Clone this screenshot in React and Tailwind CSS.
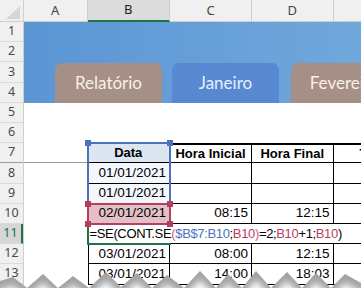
const ROW = "h-[20.2px]";

function RowHead({ n, active, freeze }) {
  return (
    <div
      className={`${ROW} flex items-center justify-center text-[12.5px] font-['Noto_Sans'] border-b ${
        freeze ? "border-[#9c9c9c]" : "border-[#dadada]"
      } ${active ? "bg-[#d6d6d6] text-[#217346] border-r-2 border-r-[#217346]" : "text-[#4a4a4a]"}`}
    >
      {n}
    </div>
  );
}

function Tab({ label, blue, className = "" }) {
  return (
    <div
      className={`w-[107px] h-[40px] shrink-0 rounded-t-[7px] flex items-center justify-center font-['Lato'] text-[17px] ${
        blue ? "bg-[#5888d0] text-[#e3f2ff]" : "bg-[#a68f86] text-[#fbf0e6]"
      } ${className}`}
    >
      {label}
    </div>
  );
}

function Handle({ className }) {
  return <div className={`absolute w-[6px] h-[6px] ${className}`} />;
}

const cellB = "w-[82.5px] shrink-0 border-r border-b border-black flex items-center justify-end pr-[3px]";
const cellC = "w-[82px] shrink-0 border-r border-b border-black flex items-center justify-end pr-[3px]";
const cellD = "w-[81.5px] shrink-0 border-r border-b border-black flex items-center justify-end pr-[3px]";
const cellE = "w-[82px] shrink-0 border-b border-black";

function DataRow({ b, c, d, bClass = "" }) {
  return (
    <div className={`${ROW} flex text-[13.5px] text-black`}>
      <div className="w-[63.5px] shrink-0" />
      <div className={`${cellB} border-l ${bClass}`}>{b}</div>
      <div className={cellC}>{c}</div>
      <div className={cellD}>{d}</div>
      <div className={cellE} />
    </div>
  );
}

function TornEdge() {
  const pts = [
    [0, 15], [13, 11], [27, 22], [43, 8], [58, 22], [73, 10], [89, 22], [106, 6],
    [121, 21], [137, 7], [152, 22], [167, 9], [184, 22], [200, 5], [216, 22],
    [228, 8], [242, 22], [256, 5], [271, 22], [287, 6], [302, 22], [316, 7],
    [331, 22], [345, 8], [361, 17], [361, 40], [0, 40],
  ];
  const p = pts.map((q) => q.join(",")).join(" ");
  return (
    <svg className="absolute left-0 top-[266px]" width="361" height="22" viewBox="0 0 361 22">
      <defs>
        <filter id="soft" x="-10%" y="-50%" width="120%" height="200%">
          <feGaussianBlur stdDeviation="3.5" />
        </filter>
      </defs>
      <polygon points={p} fill="#a2a2a2" />
      <polygon points={p} fill="#ffffff" transform="translate(0,9)" filter="url(#soft)" />
    </svg>
  );
}

export default function App() {
  const blue = "text-[#4a72bd]";
  const red = "text-[#b5405d]";
  const paren = "text-[#c9607a]";
  return (
    <div className="w-[361px] h-[288px] overflow-hidden relative bg-white font-['Liberation_Sans']">
      {/* column headers */}
      <div className="flex h-[22px] bg-[#f0f0f0] text-[13px] font-['Noto_Sans'] text-[#444]">
        <div className="w-[24px] shrink-0 border-r border-b border-[#cfcfcf] relative">
          <svg className="absolute left-[6px] top-[6px]" width="14" height="13" viewBox="0 0 14 13">
            <polygon points="14,0 14,13 0,13" fill="#d6d6d6" />
          </svg>
        </div>
        <div className="w-[63.5px] shrink-0 border-r border-b border-[#cfcfcf] flex items-center justify-center">A</div>
        <div className="w-[82.5px] shrink-0 border-r border-[#cfcfcf] border-b-2 border-b-[#217346] bg-[#dcdcdc] text-[#222] flex items-center justify-center">B</div>
        <div className="w-[82px] shrink-0 border-r border-b border-[#cfcfcf] flex items-center justify-center">C</div>
        <div className="w-[81.5px] shrink-0 border-r border-b border-[#cfcfcf] flex items-center justify-center">D</div>
        <div className="w-[82px] shrink-0 border-b border-[#cfcfcf]" />
      </div>

      <div className="flex">
        {/* row headers */}
        <div className="w-[24px] shrink-0 bg-[#f0f0f0] border-r border-[#cfcfcf]">
          {[1, 2, 3, 4, 5, 6].map((n) => (
            <RowHead key={n} n={n} />
          ))}
          <RowHead n={7} freeze />
          {[8, 9, 10].map((n) => (
            <RowHead key={n} n={n} />
          ))}
          <RowHead n={11} active />
          <RowHead n={12} />
          <RowHead n={13} />
        </div>

        {/* sheet body */}
        <div className="relative flex-1 flex flex-col">
          <div className="h-[80.8px] bg-gradient-to-r from-[#5b95d4] to-[#74abdd] flex items-end gap-[10px] pl-[31px]">
            <Tab label="Relatório" />
            <Tab label="Janeiro" blue className="w-[106px]" />
            <Tab label="Fevereiro" className="ml-[2px]" />
          </div>
          <div className="h-[40.4px]" />

          {/* row 7 header */}
          <div className={`${ROW} flex text-[13px] font-bold text-black`}>
            <div className="w-[63.5px] shrink-0 border-b border-[#9c9c9c]" />
            <div className="w-[82.5px] shrink-0 bg-[#dce6f2] border-r border-b border-black flex items-center justify-center">Data</div>
            <div className="w-[82px] shrink-0 border-t-2 border-r border-b border-black flex items-center justify-center">Hora Inicial</div>
            <div className="w-[81.5px] shrink-0 border-t-2 border-r border-b border-black flex items-center justify-center">Hora Final</div>
            <div className="w-[82px] shrink-0 border-t-2 border-b border-black flex items-center justify-center">Total</div>
          </div>
          <DataRow b="01/01/2021" bClass="bg-[#f4f7fb]" />
          <DataRow b="01/01/2021" bClass="bg-[#f4f7fb]" />
          <DataRow b="02/01/2021" c="08:15" d="12:15" bClass="bg-[#e3bfc8]" />

          {/* row 11: formula in edit mode */}
          <div className={`${ROW} flex text-[13px] text-black`}>
            <div className="w-[63.5px] shrink-0" />
            <div className="w-[82.5px] shrink-0 border-b border-black flex items-center pl-[2px] whitespace-nowrap tracking-[-0.35px]">
              <span>
                =SE(CONT.SE<span className={paren}>(</span>
                <span className={blue}>$B$7:B10</span>;<span className={red}>B10</span>
                <span className={paren}>)</span>=2;<span className={red}>B10</span>+1;
                <span className={red}>B10</span>)
              </span>
            </div>
            <div className="w-[82px] shrink-0 border-b border-black" />
            <div className="w-[81.5px] shrink-0 border-b border-black" />
            <div className={cellE} />
          </div>

          <DataRow b="03/01/2021" c="08:00" d="12:15" />
          <DataRow b="03/01/2021" c="14:00" d="18:03" />

          {/* selection / reference overlays */}
          <div className="absolute left-[62.5px] top-[201px] w-[84.5px] h-[22.2px] border-l-2 border-b-2 border-[#217346]" />
          <div className="absolute left-[62.5px] top-[120.2px] w-[84.5px] h-[82.8px] border-2 border-[#4a72bd]" />
          <Handle className="left-[60.5px] top-[118.2px] bg-[#4a72bd]" />
          <Handle className="left-[143px] top-[118.2px] bg-[#4a72bd]" />
          <div className="absolute left-[62.5px] top-[180.8px] w-[84.5px] h-[22.2px] border-2 border-[#b5405d]" />
          <Handle className="left-[60.5px] top-[178.8px] bg-[#b5405d]" />
          <Handle className="left-[143px] top-[178.8px] bg-[#b5405d]" />
          <Handle className="left-[60.5px] top-[199px] bg-[#b5405d]" />
          <Handle className="left-[143px] top-[199px] bg-[#b5405d]" />
        </div>
      </div>

      <TornEdge />
    </div>
  );
}
